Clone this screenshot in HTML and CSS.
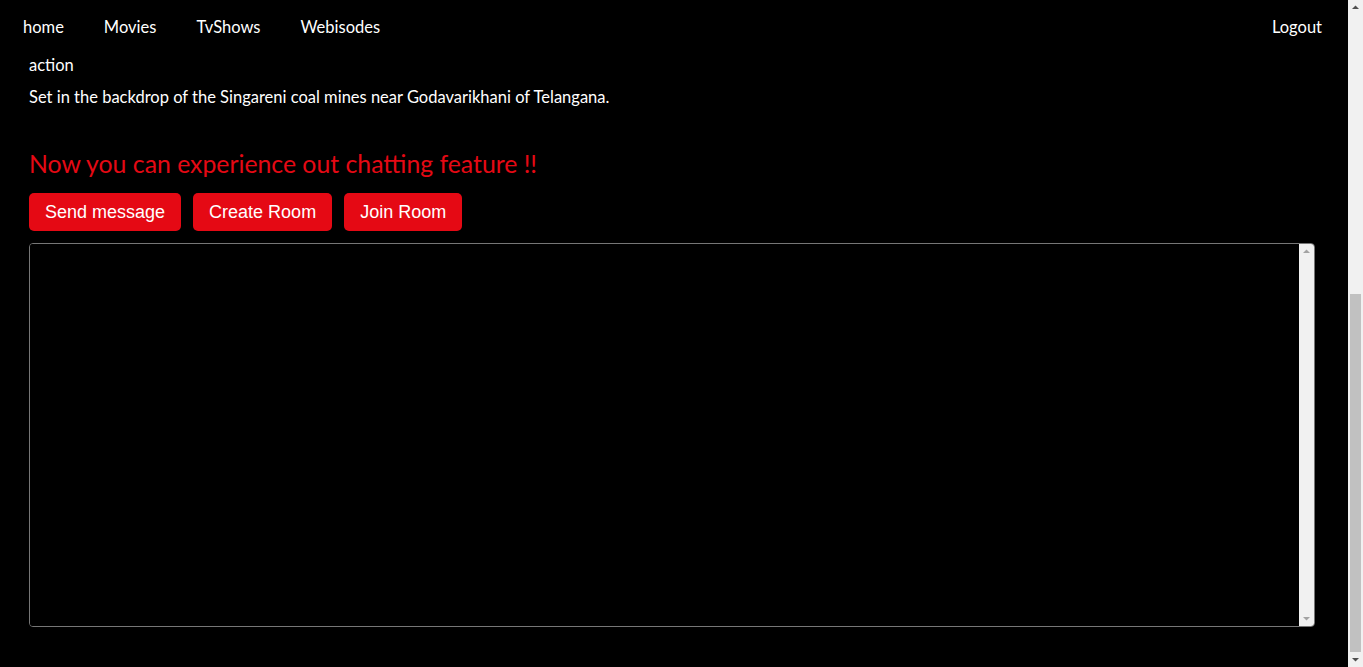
FILE: index.html
```html
<!DOCTYPE html>
<html lang="en">
<head>
<meta charset="utf-8">
<title>Movie</title>
<link rel="stylesheet" href="styles.css">
</head>
<body>
<div class="page">
  <nav class="navbar">
    <div class="nav-links">
      <a class="nav-link" href="#">home</a>
      <a class="nav-link" href="#">Movies</a>
      <a class="nav-link" href="#">TvShows</a>
      <a class="nav-link" href="#">Webisodes</a>
    </div>
    <a class="nav-link" href="#">Logout</a>
  </nav>
  <section class="details">
    <p class="genre">action</p>
    <p class="desc">Set in the backdrop of the Singareni coal mines near Godavarikhani of Telangana.</p>
  </section>
  <section class="chat">
    <h2 class="chat-title">Now you can experience out chatting feature !!</h2>
    <div class="chat-actions">
      <button class="btn">Send message</button>
      <button class="btn">Create Room</button>
      <button class="btn">Join Room</button>
    </div>
    <div class="chat-box">
      <textarea class="chat-input"></textarea>
      <div class="sb sb-inner">
        <svg class="sb-arrow" width="15" height="15" viewBox="0 0 15 15"><path d="M4 9h7L7.5 5.5z" fill="#a3a3a3"/></svg>
        <div class="sb-track"></div>
        <svg class="sb-arrow" width="15" height="15" viewBox="0 0 15 15"><path d="M4 6h7L7.5 9.5z" fill="#a3a3a3"/></svg>
      </div>
    </div>
  </section>
</div>
<div class="sb sb-page">
  <svg class="sb-arrow" width="15" height="15" viewBox="0 0 15 15"><path d="M4 9h7L7.5 5.5z" fill="#505050"/></svg>
  <div class="sb-track sb-page-track">
    <div class="sb-thumb"></div>
  </div>
  <svg class="sb-arrow" width="15" height="15" viewBox="0 0 15 15"><path d="M4 6h7L7.5 9.5z" fill="#505050"/></svg>
</div>
</body>
</html>
```

FILE: styles.css
```css
html, body {
  margin: 0;
  padding: 0;
  background: #000;
  overflow: hidden;
}
body {
  color: #fff;
  font-family: "Lato", "Noto Sans", sans-serif;
  font-size: 16.5px;
}
.page {
  margin-right: 15px;
}
.navbar {
  height: 54px;
  display: flex;
  align-items: center;
  justify-content: space-between;
  padding: 0 26px 0 23px;
}
.nav-links {
  display: flex;
  gap: 40px;
}
.nav-link {
  color: #fff;
  text-decoration: none;
  line-height: 20px;
}
.details {
  padding: 1px 29px 0;
}
.details p {
  margin: 0 0 12px;
  line-height: 20px;
}
.chat {
  padding: 30px 33px 40px 29px;
}
.chat-title {
  margin: 0 0 14px;
  color: #e50914;
  font-weight: 400;
  font-size: 24.8px;
  line-height: 30px;
}
.chat-actions {
  display: flex;
  gap: 12px;
  margin-bottom: 12px;
}
.btn {
  background: #e50914;
  color: #fff;
  border: none;
  border-radius: 5px;
  font-family: "Liberation Sans", Arial, sans-serif;
  font-size: 18px;
  line-height: 22px;
  padding: 8px 16px;
}
.chat-box {
  display: flex;
  height: 384px;
  box-sizing: border-box;
  border: 1px solid #767676;
  border-radius: 4px;
  overflow: hidden;
  background: #000;
}
.chat-input {
  flex: 1;
  margin: 0;
  padding: 2px;
  border: none;
  outline: none;
  background: #000;
  color: #fff;
  resize: none;
}
.sb {
  width: 15px;
  background: #f1f1f1;
  display: flex;
  flex-direction: column;
}
.sb-arrow {
  display: block;
  flex: none;
}
.sb-track {
  flex: 1;
}
.sb-page {
  position: fixed;
  top: 0;
  right: 0;
  bottom: 0;
}
.sb-page-track {
  display: flex;
  flex-direction: column;
  justify-content: flex-end;
  padding-bottom: 0;
}
.sb-thumb {
  height: 358px;
  margin: 0 2px;
  background: #c1c1c1;
}
```
